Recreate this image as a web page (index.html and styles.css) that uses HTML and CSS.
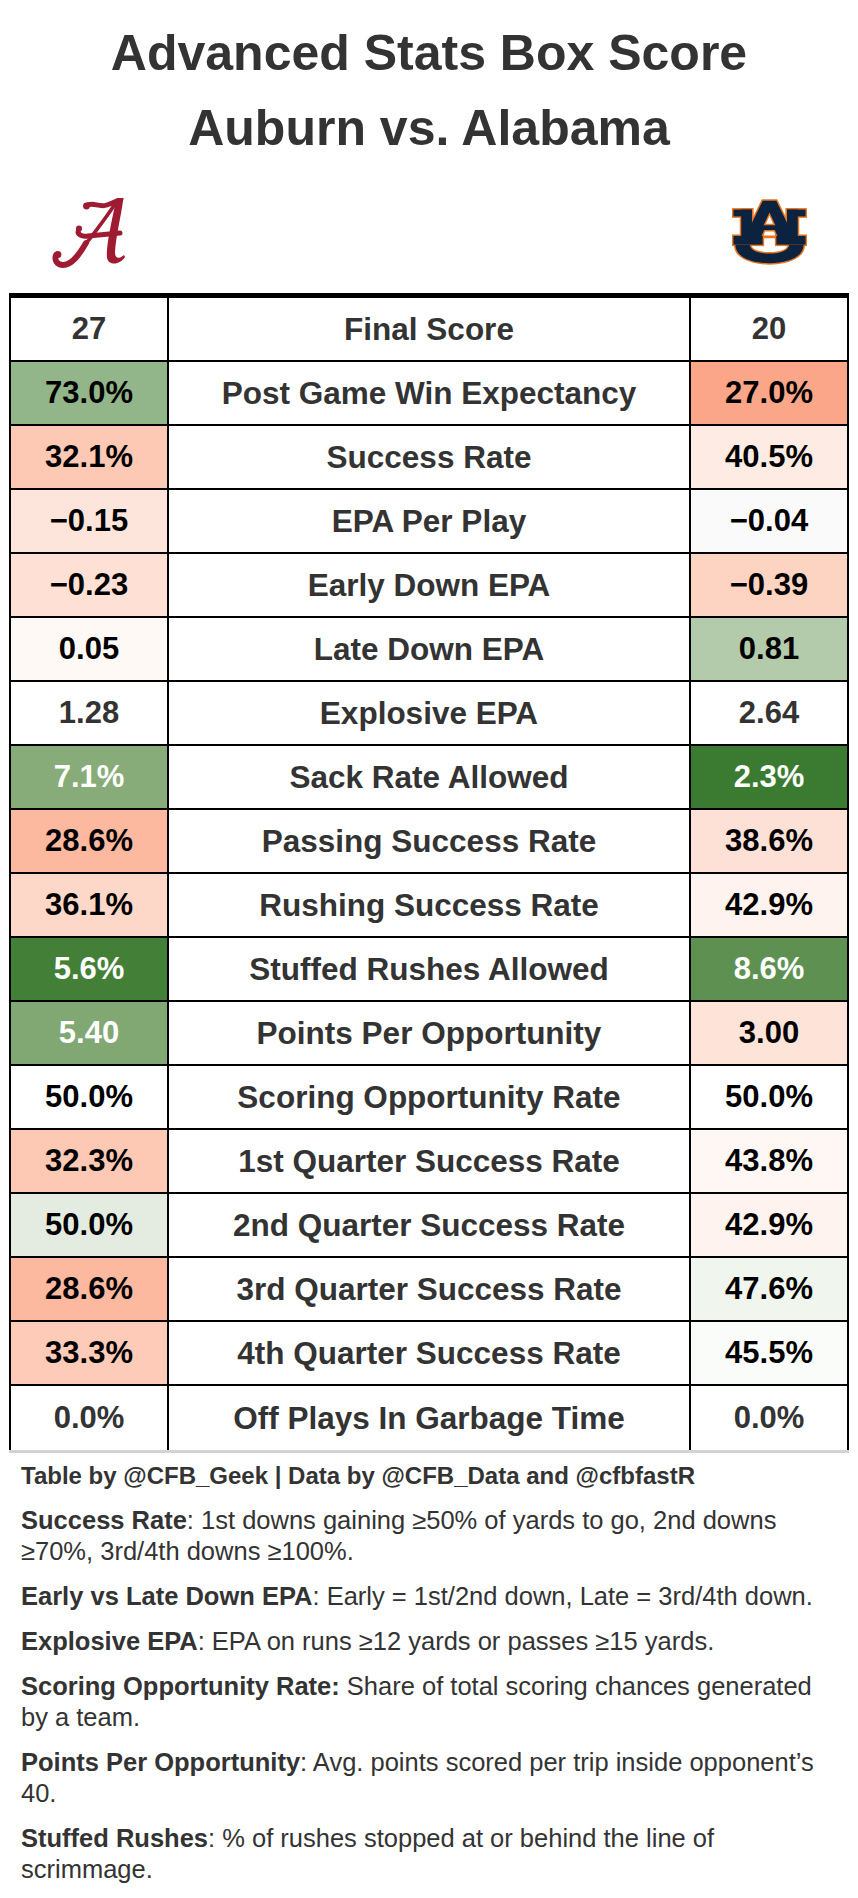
FILE: index.html
```html
<!DOCTYPE html>
<html lang="en">
<head>
<meta charset="utf-8">
<title>Advanced Stats Box Score</title>
<link rel="stylesheet" href="styles.css">
</head>
<body>
<header class="title">
  <div>Advanced Stats Box Score</div>
  <div>Auburn vs. Alabama</div>
</header>

<div class="logos">
  <svg class="logo logo-bama" viewBox="0 0 72 72" width="74" height="72" aria-label="Alabama">
    <g fill="#9e1b32">
      <path d="M63,3 C66,1 70,0 70,3 C68,18 63,38 62,54 C62,60 65,62 71,57 L72,59 C67,67 56,68 54,60 C53,50 57,30 63,3 Z"/>
      <circle cx="33.5" cy="8" r="3.4"/>
      <circle cx="4.8" cy="56.5" r="3.6"/>
      <circle cx="26" cy="30.5" r="3"/>
    </g>
    <g fill="none" stroke="#9e1b32" stroke-linecap="round" stroke-linejoin="round">
      <path d="M33,8 C39,3 46,10 54,7 C60,5 64,3 68,1" stroke-width="5"/>
      <path d="M62,6 C53,20 42,34 32,47" stroke-width="3.6"/>
      <path d="M33,45 C26,57 19,67 10,67 C4,67 1,62 3,57" stroke-width="5.8"/>
      <path d="M26,31 C23,36 28,39 35,38 L67,35" stroke-width="5"/>
    </g>
  </svg>
  <svg class="logo logo-au" viewBox="-1.5 -1.5 79 69" width="77" height="68" aria-label="Auburn">
    <defs>
      <g id="au">
        <path fill-rule="evenodd" d="M31,1 H45 L63,38 H13 Z M38,13 L44,26 H32 Z M32.5,31 H43.5 L46.5,38 H29.5 Z"/>
        <rect x="1" y="37" width="30" height="9"/>
        <rect x="45" y="37" width="30" height="9"/>
        <rect x="9" y="10" width="11" height="29"/>
        <rect x="1" y="10" width="19" height="7"/>
        <rect x="56" y="10" width="11" height="29"/>
        <rect x="56" y="10" width="19" height="7"/>
        <path d="M3,46 H18 C18,52 27,55 38,55 C49,55 58,52 58,46 H73 C73,58 58,65 38,65 C18,65 3,58 3,46 Z"/>
      </g>
    </defs>
    <use href="#au" fill="#e87722" stroke="#e87722" stroke-width="3"/>
    <use href="#au" fill="#0c2340"/>
  </svg>
</div>

<section class="box">
  <div class="row"><div class="cell neutral">27</div><div class="cell label">Final Score</div><div class="cell neutral">20</div></div>
  <div class="row"><div class="cell dark" style="background:#93b58a">73.0%</div><div class="cell label">Post Game Win Expectancy</div><div class="cell dark" style="background:#fca689">27.0%</div></div>
  <div class="row"><div class="cell dark" style="background:#fdc9b4">32.1%</div><div class="cell label">Success Rate</div><div class="cell dark" style="background:#feebe3">40.5%</div></div>
  <div class="row"><div class="cell dark" style="background:#fee5dc">&minus;0.15</div><div class="cell label">EPA Per Play</div><div class="cell dark" style="background:#fafafa">&minus;0.04</div></div>
  <div class="row"><div class="cell dark" style="background:#fee0d4">&minus;0.23</div><div class="cell label">Early Down EPA</div><div class="cell dark" style="background:#fdd4c2">&minus;0.39</div></div>
  <div class="row"><div class="cell dark" style="background:#fff9f6">0.05</div><div class="cell label">Late Down EPA</div><div class="cell dark" style="background:#b3cbaa">0.81</div></div>
  <div class="row"><div class="cell neutral">1.28</div><div class="cell label">Explosive EPA</div><div class="cell neutral">2.64</div></div>
  <div class="row"><div class="cell light" style="background:#87ac79">7.1%</div><div class="cell label">Sack Rate Allowed</div><div class="cell light" style="background:#3b7a31">2.3%</div></div>
  <div class="row"><div class="cell dark" style="background:#fdb8a0">28.6%</div><div class="cell label">Passing Success Rate</div><div class="cell dark" style="background:#fee1d6">38.6%</div></div>
  <div class="row"><div class="cell dark" style="background:#fdd7c8">36.1%</div><div class="cell label">Rushing Success Rate</div><div class="cell dark" style="background:#fff3ef">42.9%</div></div>
  <div class="row"><div class="cell light" style="background:#447f37">5.6%</div><div class="cell label">Stuffed Rushes Allowed</div><div class="cell light" style="background:#5e9151">8.6%</div></div>
  <div class="row"><div class="cell light" style="background:#81a873">5.40</div><div class="cell label">Points Per Opportunity</div><div class="cell dark" style="background:#fee3d9">3.00</div></div>
  <div class="row"><div class="cell dark">50.0%</div><div class="cell label">Scoring Opportunity Rate</div><div class="cell dark">50.0%</div></div>
  <div class="row"><div class="cell dark" style="background:#fdc9b5">32.3%</div><div class="cell label">1st Quarter Success Rate</div><div class="cell dark" style="background:#fff7f4">43.8%</div></div>
  <div class="row"><div class="cell dark" style="background:#e4ebe1">50.0%</div><div class="cell label">2nd Quarter Success Rate</div><div class="cell dark" style="background:#fff3ef">42.9%</div></div>
  <div class="row"><div class="cell dark" style="background:#fdb8a0">28.6%</div><div class="cell label">3rd Quarter Success Rate</div><div class="cell dark" style="background:#f0f5ee">47.6%</div></div>
  <div class="row"><div class="cell dark" style="background:#fdcbb8">33.3%</div><div class="cell label">4th Quarter Success Rate</div><div class="cell dark" style="background:#fafcf9">45.5%</div></div>
  <div class="row"><div class="cell neutral">0.0%</div><div class="cell label">Off Plays In Garbage Time</div><div class="cell neutral">0.0%</div></div>
</section>

<footer class="notes">
  <p class="credit">Table by @CFB_Geek | Data by @CFB_Data and @cfbfastR</p>
  <p><b>Success Rate</b><span>: 1st downs gaining &ge;50% of yards to go, 2nd downs</span> <span>&ge;70%, 3rd/4th downs &ge;100%.</span></p>
  <p><b>Early vs Late Down EPA</b>: Early = 1st/2nd down, Late = 3rd/4th down.</p>
  <p><b>Explosive EPA</b>: EPA on runs &ge;12 yards or passes &ge;15 yards.</p>
  <p><b>Scoring Opportunity Rate:</b><span> Share of total scoring chances generated</span> <span>by a team.</span></p>
  <p><b>Points Per Opportunity</b><span>: Avg. points scored per trip inside opponent&rsquo;s</span> <span>40.</span></p>
  <p><b>Stuffed Rushes</b><span>: % of rushes stopped at or behind the line of</span> <span>scrimmage.</span></p>
</footer>
</body>
</html>
```

FILE: styles.css
```css
* {
  box-sizing: border-box;
}

body {
  margin: 0;
  width: 858px;
  background: #ffffff;
  color: #333333;
  font-family: "Liberation Sans", Arial, sans-serif;
}

.title {
  padding-top: 16px;
  text-align: center;
  font-size: 50px;
  line-height: 75px;
  font-weight: 700;
  color: #333333;
}

.logos {
  display: flex;
  justify-content: space-between;
  align-items: flex-start;
  height: 127px;
  padding: 32px 50px 0 52px;
}

.logo {
  display: block;
}

.logo-au {
  margin-top: 0;
}

.box {
  margin-left: 9px;
  width: 840px;
  border-top: 5px solid #000000;
  border-bottom: 3px solid #d3d3d3;
}

.row {
  display: grid;
  grid-template-columns: 160px 522px 158px;
}

.cell {
  height: 64px;
  display: flex;
  align-items: center;
  justify-content: center;
  border-right: 2px solid #000000;
  border-bottom: 2px solid #000000;
  font-size: 31px;
  font-weight: 700;
  background: #ffffff;
}

.cell:first-child {
  border-left: 2px solid #000000;
}

.row:last-child .cell {
  border-bottom: none;
}

.label {
  font-size: 31.5px;
}

.label,
.neutral {
  color: #333333;
}

.dark {
  color: #000000;
}

.light {
  color: #ffffff;
}

.notes {
  padding: 7px 29px 0 21px;
  color: #333333;
}

.notes p {
  margin: 0 0 14px;
  font-size: 25.5px;
  line-height: 31px;
}

.notes .credit {
  font-size: 24px;
  font-weight: 700;
}

.notes b {
  font-weight: 700;
}
```
